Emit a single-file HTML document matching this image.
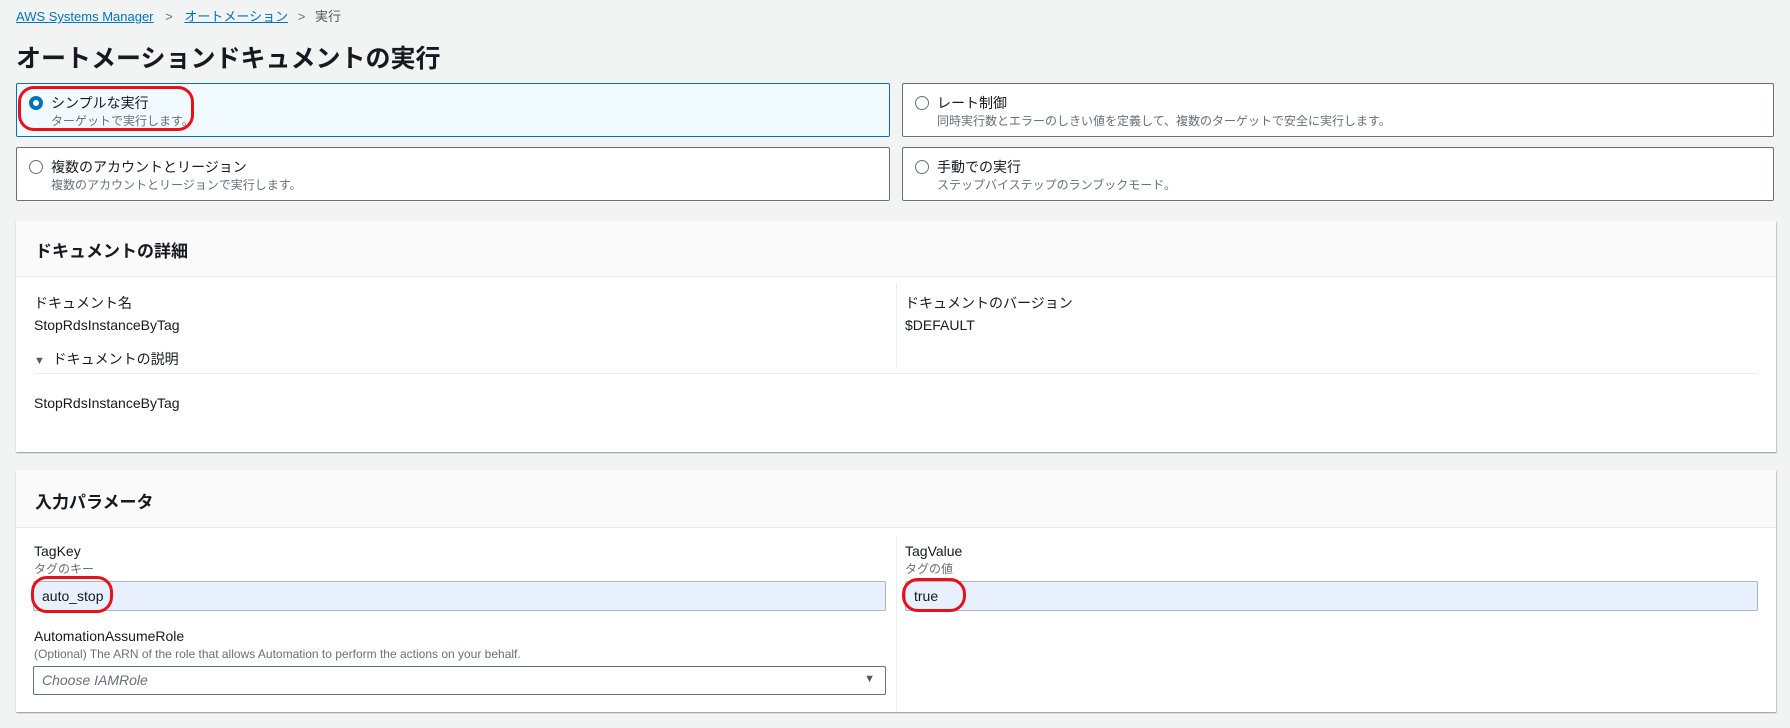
<!DOCTYPE html>
<html><head><meta charset="utf-8"><style>
*{box-sizing:border-box;margin:0;padding:0}
body{width:1790px;height:728px;background:#f2f3f3;font-family:"Liberation Sans","Noto Sans CJK JP",sans-serif;color:#16191f;position:relative;overflow:hidden;font-size:14px}
.a{position:absolute;white-space:nowrap}
.link{color:#0073bb;text-decoration:underline}
.card{position:absolute;background:#fff;border:1px solid #687078;border-radius:2px}
.card.sel{background:#f1faff;border-color:#0073bb}
.radio{position:absolute;left:12px;top:12px;width:14px;height:14px;border-radius:50%;border:1.5px solid #687078;background:#fff}
.sel .radio{border:4px solid #0073bb}
.ct{position:absolute;left:34px;top:9px;font-size:14px}
.cd{position:absolute;left:34px;top:28px;font-size:12px;color:#687078}
.panel{position:absolute;background:#fff;box-shadow:0 1px 1px rgba(0,28,36,.3),1px 1px 1px rgba(0,28,36,.15)}
.ph{position:absolute;left:0;top:0;right:0;background:#fafafa;border-bottom:1px solid #eaeded}
.ph span{position:absolute;left:19px;font-weight:bold;font-size:17px}
.sm{font-size:12px;color:#687078}
.inp{position:absolute;background:#e9f0fd;border:1px solid #aab7b8;border-radius:2px}
.oval{position:absolute;border:3px solid #e8111a;border-radius:16px}
</style></head><body>
<div class="a" style="left:16px;top:6px;font-size:13px"><span class="link">AWS Systems Manager</span> <span style="color:#687078;margin:0 8px">&gt;</span> <span class="link">オートメーション</span> <span style="color:#687078;margin:0 6px">&gt;</span> <span style="color:#545b64">実行</span></div>
<div class="a" style="left:16px;top:39px;font-size:25px;font-weight:bold">オートメーションドキュメントの実行</div>

<div class="card sel" style="left:16px;top:83px;width:874px;height:54px"><div class="radio"></div><div class="ct">シンプルな実行</div><div class="cd">ターゲットで実行します。</div></div>
<div class="card" style="left:902px;top:83px;width:872px;height:54px"><div class="radio"></div><div class="ct">レート制御</div><div class="cd">同時実行数とエラーのしきい値を定義して、複数のターゲットで安全に実行します。</div></div>
<div class="card" style="left:16px;top:147px;width:874px;height:54px"><div class="radio"></div><div class="ct">複数のアカウントとリージョン</div><div class="cd">複数のアカウントとリージョンで実行します。</div></div>
<div class="card" style="left:902px;top:147px;width:872px;height:54px"><div class="radio"></div><div class="ct">手動での実行</div><div class="cd">ステップバイステップのランブックモード。</div></div>
<div class="oval" style="left:18px;top:86px;width:176px;height:45px"></div>

<div class="panel" style="left:16px;top:221px;width:1760px;height:231px">
 <div class="ph" style="height:56px"><span style="top:16px">ドキュメントの詳細</span></div>
 <div class="a" style="left:18px;top:72px">ドキュメント名</div>
 <div class="a" style="left:18px;top:96px">StopRdsInstanceByTag</div>
 <div class="a" style="left:880px;top:62px;width:1px;height:85px;background:#eaeded"></div>
 <div class="a" style="left:889px;top:72px">ドキュメントのバージョン</div>
 <div class="a" style="left:889px;top:96px">$DEFAULT</div>
 <div class="a" style="left:18px;top:128px"><span style="font-size:11px;color:#545b64">▼</span>&nbsp; ドキュメントの説明</div>
 <div class="a" style="left:18px;top:152px;width:1724px;height:1px;background:#eaeded"></div>
 <div class="a" style="left:18px;top:174px">StopRdsInstanceByTag</div>
</div>

<div class="panel" style="left:16px;top:470px;width:1760px;height:242px">
 <div class="ph" style="height:58px"><span style="top:18px">入力パラメータ</span></div>
 <div class="a" style="left:18px;top:73px">TagKey</div>
 <div class="a sm" style="left:18px;top:90px">タグのキー</div>
 <div class="inp" style="left:17px;top:111px;width:853px;height:30px"><span class="a" style="left:8px;top:6px">auto_stop</span></div>
 <div class="a" style="left:880px;top:66px;width:1px;height:176px;background:#eaeded"></div>
 <div class="a" style="left:889px;top:73px">TagValue</div>
 <div class="a sm" style="left:889px;top:90px">タグの値</div>
 <div class="inp" style="left:889px;top:111px;width:853px;height:30px"><span class="a" style="left:8px;top:6px">true</span></div>
 <div class="a" style="left:18px;top:158px">AutomationAssumeRole</div>
 <div class="a sm" style="left:18px;top:177px">(Optional) The ARN of the role that allows Automation to perform the actions on your behalf.</div>
 <div class="a" style="left:17px;top:196px;width:853px;height:29px;border:1px solid #687078;border-radius:2px;background:#fff"><span class="a" style="left:8px;top:5px;font-style:italic;color:#687078">Choose IAMRole</span><span class="a" style="right:10px;top:6px;font-size:11px;color:#545b64">▼</span></div>
</div>
<div class="oval" style="left:31px;top:576px;width:82px;height:37px"></div>
<div class="oval" style="left:902px;top:578px;width:64px;height:34px"></div>
</body></html>
